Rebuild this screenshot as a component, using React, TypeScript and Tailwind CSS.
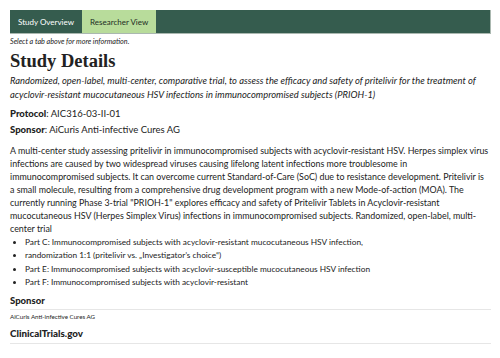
export default function App() {
  const parts = [
    'Part C: Immunocompromised subjects with acyclovir-resistant mucocutaneous HSV infection,',
    'randomization 1:1 (pritelivir vs. \u201eInvestigator\u2019s choice\u201c)',
    'Part E: Immunocompromised subjects with acyclovir-susceptible mucocutaneous HSV infection',
    'Part F: Immunocompromised subjects with acyclovir-resistant',
  ];

  const lines = [
    'A multi-center study assessing pritelivir in immunocompromised subjects with acyclovir-resistant HSV. Herpes simplex virus',
    'infections are caused by two widespread viruses causing lifelong latent infections more troublesome in',
    'immunocompromised subjects. It can overcome current Standard-of-Care (SoC) due to resistance development. Pritelivir is',
    'a small molecule, resulting from a comprehensive drug development program with a new Mode-of-action (MOA). The',
    'currently running Phase 3-trial "PRIOH-1" explores efficacy and safety of Pritelivir Tablets in Acyclovir-resistant',
    'mucocutaneous HSV (Herpes Simplex Virus) infections in immunocompromised subjects. Randomized, open-label, multi-',
    'center trial',
  ];

  return (
    <div className="min-h-[358px] bg-white px-[10px] pt-[10px] text-[#222] font-['Lato','Open_Sans',sans-serif]">
      <div className="flex h-[24px] w-[481px] bg-[#355c4e] border-b border-r border-[#aab8b0]">
        <button className="px-[8px] text-[8px] text-white">Study Overview</button>
        <button className="px-[8px] text-[8px] text-[#1d2e24] bg-[#b8dc9b]">Researcher View</button>
      </div>
      <p className="mt-[3px] text-[7.2px] italic">Select a tab above for more information.</p>

      <h1 className="mt-[3px] text-[18.5px] leading-[21px] font-bold font-['Liberation_Serif',serif]">
        Study Details
      </h1>
      <p className="mt-[2px] text-[9.4px] leading-[14px] italic">
        Randomized, open-label, multi-center, comparative trial, to assess the efficacy and safety of pritelivir for the treatment of
        acyclovir-resistant mucocutaneous HSV infections in immunocompromised subjects (PRIOH-1)
      </p>

      <p className="mt-[5px] text-[9.5px] leading-[13px]">
        <span className="font-black">Protocol</span>: AIC316-03-II-01
      </p>
      <p className="mt-[3px] text-[9.5px] leading-[13px]">
        <span className="font-black">Sponsor</span>: AiCuris Anti-infective Cures AG
      </p>

      <div className="mt-[8px] w-[482px] text-[8.9px] leading-[13px] whitespace-nowrap">
        {lines.map((l) => (
          <div key={l}>{l}</div>
        ))}
      </div>

      <ul className="mt-[1px] ml-[15px] list-disc text-[8.3px] leading-[13.4px]">
        {parts.map((p) => (
          <li key={p}>{p}</li>
        ))}
      </ul>

      <div className="mt-[5px] w-[481px] border-b border-[#e6e6e6] pb-[2px]">
        <h2 className="text-[9.5px] font-black leading-[13px]">Sponsor</h2>
      </div>
      <p className="mt-[2px] text-[6.2px] leading-[10px]">AiCuris Anti-infective Cures AG</p>

      <div className="mt-[4px] w-[481px] border-b border-[#e6e6e6] pb-[3px]">
        <h2 className="text-[9.8px] font-black leading-[14px]">ClinicalTrials.gov</h2>
      </div>
    </div>
  );
}
